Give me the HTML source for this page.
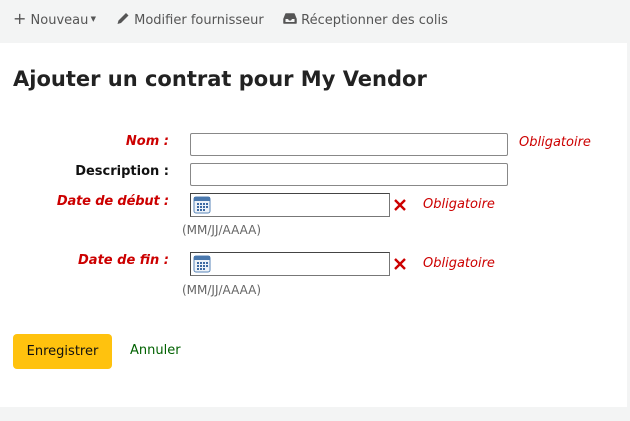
<!DOCTYPE html>
<html><head><meta charset="utf-8"><style>
*{box-sizing:border-box;margin:0;padding:0}
body{width:630px;height:421px;overflow:hidden;background:#f3f4f4;font-family:"DejaVu Sans","Liberation Sans",sans-serif;position:relative}
.main{position:absolute;left:0;top:43px;width:627px;height:364px;background:#fff}
.tb{position:absolute;top:12px;font-size:13px;color:#555}
.a{position:absolute;white-space:nowrap}
h1{position:absolute;left:13px;top:67px;font-size:21px;font-weight:bold;color:#222}
.lbl{position:absolute;right:461px;font-size:13px;font-weight:bold;white-space:nowrap}
.req{color:#c00;font-style:italic}
.inp{position:absolute;left:190px;width:318px;height:23px;border:1px solid #888;border-radius:2px;background:#fff}
.dt{position:absolute;left:190px;width:200px;height:24px;border:1px solid #444;border-right-color:#777;border-bottom-color:#777;background:#fff}
.ob{position:absolute;font-size:13px;font-style:italic;color:#c00}
.hint{position:absolute;left:182px;font-size:12px;color:#666}
.x{position:absolute;left:393px}
</style></head><body>
<div class="tb" style="left:13px"><span style="font-size:16px;line-height:13px">+</span> Nouveau<span style="font-size:7px;vertical-align:3px"> ▼</span></div>
<div class="tb" style="left:116px"><svg width="14" height="13" viewBox="0 0 14 13" style="vertical-align:-1px"><path d="M1.5 12 L2.5 8.5 L10 1 L12.5 3.5 L5 11 Z" fill="#555"/></svg> Modifier fournisseur</div>
<div class="tb" style="left:283px"><svg width="14" height="13" viewBox="0 0 14 13" style="vertical-align:-1px"><path d="M1 7 L3 2 H11 L13 7 V11 H1 Z" fill="#555" stroke="#555" stroke-width="1.5" stroke-linejoin="round"/><path d="M2.5 7 H5 L6 8.5 H8 L9 7 H11.5 V10 H2.5 Z" fill="#f3f4f4"/></svg> Réceptionner des colis</div>
<div class="main"></div>
<h1>Ajouter un contrat pour My Vendor</h1>
<div class="lbl req" style="top:134px">Nom :</div>
<div class="inp" style="top:133px"></div>
<div class="ob" style="left:519px;top:135px">Obligatoire</div>
<div class="lbl" style="top:164px;color:#111">Description :</div>
<div class="inp" style="top:163px"></div>
<div class="lbl req" style="top:194px;letter-spacing:-0.15px">Date de début :</div>
<div class="dt" style="top:193px"><svg width="18" height="18" style="position:absolute;left:2px;top:2px" viewBox="0 0 18 18"><rect x="1" y="1" width="16" height="16" rx="2" fill="#eef3f9" stroke="#5a86b8"/><rect x="1" y="1" width="16" height="4" fill="#4a78ad"/><g fill="#3d6aa3"><rect x="4" y="7" width="2" height="2"/><rect x="7" y="7" width="2" height="2"/><rect x="10" y="7" width="2" height="2"/><rect x="13" y="7" width="2" height="2"/><rect x="4" y="10" width="2" height="2"/><rect x="7" y="10" width="2" height="2"/><rect x="10" y="10" width="2" height="2"/><rect x="13" y="10" width="2" height="2"/><rect x="4" y="13" width="2" height="2"/><rect x="7" y="13" width="2" height="2"/><rect x="10" y="13" width="2" height="2"/></g></svg></div>
<svg class="x" style="top:198px" width="14" height="14" viewBox="0 0 14 14"><path d="M2 2 L12 12 M12 2 L2 12" stroke="#c00" stroke-width="2.4"/></svg>
<div class="ob" style="left:423px;top:197px">Obligatoire</div>
<div class="hint" style="top:223px">(MM/JJ/AAAA)</div>
<div class="lbl req" style="top:253px">Date de fin :</div>
<div class="dt" style="top:252px"><svg width="18" height="18" style="position:absolute;left:2px;top:2px" viewBox="0 0 18 18"><rect x="1" y="1" width="16" height="16" rx="2" fill="#eef3f9" stroke="#5a86b8"/><rect x="1" y="1" width="16" height="4" fill="#4a78ad"/><g fill="#3d6aa3"><rect x="4" y="7" width="2" height="2"/><rect x="7" y="7" width="2" height="2"/><rect x="10" y="7" width="2" height="2"/><rect x="13" y="7" width="2" height="2"/><rect x="4" y="10" width="2" height="2"/><rect x="7" y="10" width="2" height="2"/><rect x="10" y="10" width="2" height="2"/><rect x="13" y="10" width="2" height="2"/><rect x="4" y="13" width="2" height="2"/><rect x="7" y="13" width="2" height="2"/><rect x="10" y="13" width="2" height="2"/></g></svg></div>
<svg class="x" style="top:257px" width="14" height="14" viewBox="0 0 14 14"><path d="M2 2 L12 12 M12 2 L2 12" stroke="#c00" stroke-width="2.4"/></svg>
<div class="ob" style="left:423px;top:256px">Obligatoire</div>
<div class="hint" style="top:283px">(MM/JJ/AAAA)</div>
<div class="a" style="left:13px;top:334px;width:99px;height:35px;background:#ffc20e;border-radius:4px;font-size:13px;color:#111;text-align:center;line-height:35px">Enregistrer</div>
<div class="a" style="left:130px;top:343px;font-size:13px;color:#006100">Annuler</div>
</body></html>
